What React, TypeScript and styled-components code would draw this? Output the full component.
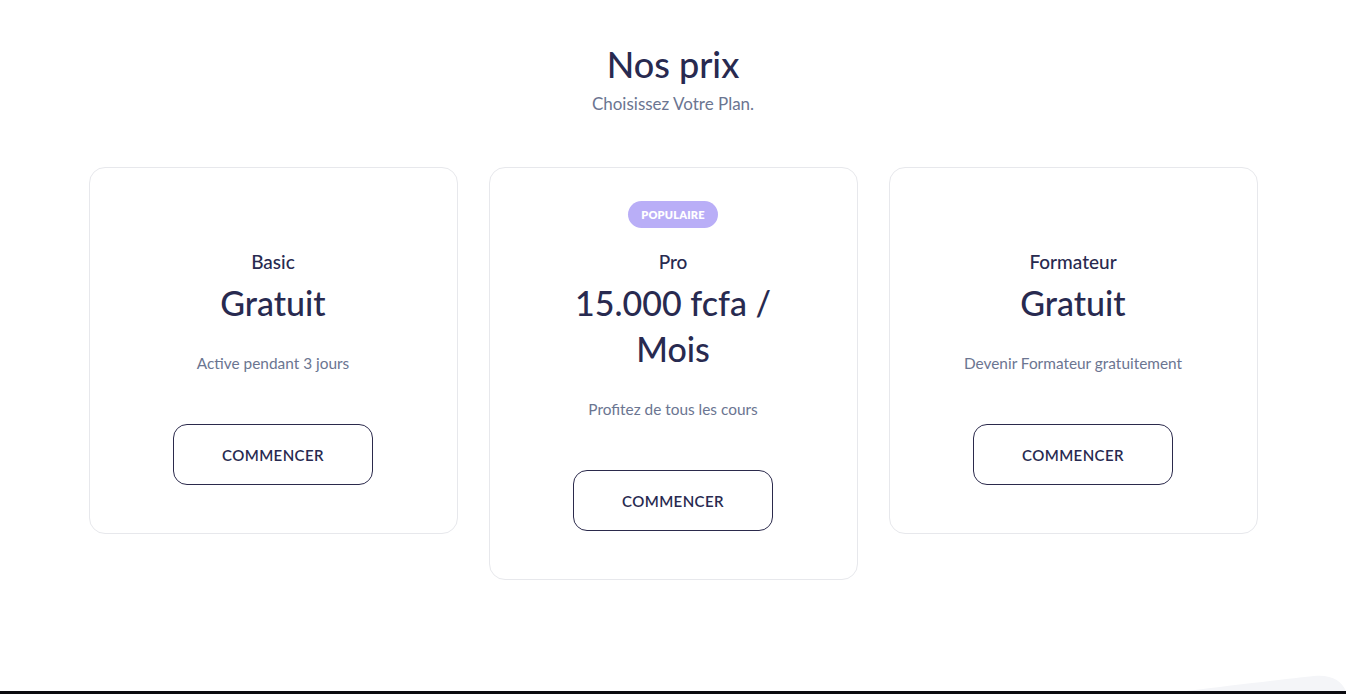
import React from "react";
import styled, { createGlobalStyle } from "styled-components";

const Global = createGlobalStyle`
  html, body { margin: 0; padding: 0; background: #ffffff; }
  body { font-family: Lato, "Noto Sans", sans-serif; color: #272a4f; }
  * { box-sizing: border-box; }
`;

const Page = styled.div`
  display: flex;
  flex-direction: column;
  min-height: 694px;
`;

const Section = styled.section`
  position: relative;
  height: 691px;
  padding-top: 42px;
  overflow: hidden;
`;

const Header = styled.header`
  display: flex;
  flex-direction: column;
  align-items: center;
  gap: 6px;
`;

const Title = styled.h2`
  margin: 0;
  font-size: 36px;
  line-height: 44px;
  font-weight: 500;
  color: #282a50;
`;

const Subtitle = styled.p`
  margin: 0;
  font-size: 17px;
  line-height: 24px;
  color: #6b7591;
`;

const Grid = styled.div`
  display: grid;
  grid-template-columns: repeat(3, 369px);
  column-gap: 31px;
  justify-content: center;
  align-items: start;
  margin-top: 51px;
`;

const Card = styled.div`
  display: flex;
  flex-direction: column;
  align-items: center;
  text-align: center;
  border: 1px solid #e7e8ec;
  border-radius: 16px;
  padding: 33px 48px 48px;
  background: #fff;
`;

const BadgeSlot = styled.div`
  height: 27px;
  margin-bottom: 20px;
  display: flex;
  justify-content: center;
`;

const Badge = styled.span`
  display: inline-flex;
  align-items: center;
  height: 27px;
  padding: 0 13px;
  border-radius: 14px;
  background: #b9aef7;
  color: #fff;
  font-size: 11px;
  font-weight: 800;
  letter-spacing: 0.2px;
`;

const PlanName = styled.h3`
  margin: 0;
  font-size: 19px;
  line-height: 28px;
  font-weight: 500;
  color: #282a50;
`;

const Price = styled.div`
  margin-top: 4px;
  max-width: 250px;
  font-size: 34px;
  line-height: 46px;
  font-weight: 500;
  color: #282a50;
`;

const Desc = styled.p`
  margin: 25px 0 0;
  font-size: 15.4px;
  line-height: 24px;
  color: #6b7591;
`;

const Button = styled.button`
  margin-top: 49px;
  width: 200px;
  height: 61px;
  border: 1px solid #2b2a4c;
  border-radius: 14px;
  background: #fff;
  color: #282a50;
  font-family: inherit;
  font-size: 15px;
  font-weight: 600;
  letter-spacing: 0.4px;
  text-transform: uppercase;
  cursor: pointer;
`;

const Wave = styled.svg`
  position: absolute;
  right: 0;
  bottom: 0;
  width: 200px;
  height: 20px;
`;

const Footer = styled.footer`
  height: 3px;
  background: #0a0a0f;
`;

type Plan = { name: string; price: string; desc: string; badge?: string };

const plans: Plan[] = [
  { name: "Basic", price: "Gratuit", desc: "Active pendant 3 jours" },
  { name: "Pro", price: "15.000 fcfa / Mois", desc: "Profitez de tous les cours", badge: "POPULAIRE" },
  { name: "Formateur", price: "Gratuit", desc: "Devenir Formateur gratuitement" },
];

export default function App() {
  return (
    <Page>
      <Global />
      <Section>
        <Header>
          <Title>Nos prix</Title>
          <Subtitle>Choisissez Votre Plan.</Subtitle>
        </Header>
        <Grid>
          {plans.map((p) => (
            <Card key={p.name}>
              <BadgeSlot>{p.badge && <Badge>{p.badge}</Badge>}</BadgeSlot>
              <PlanName>{p.name}</PlanName>
              <Price>{p.price}</Price>
              <Desc>{p.desc}</Desc>
              <Button>Commencer</Button>
            </Card>
          ))}
        </Grid>
        <Wave viewBox="0 0 200 20" preserveAspectRatio="none">
          <path d="M40 20 C 90 14, 140 8, 168 5 C 185 3, 196 10, 200 20 Z" fill="#f4f5f8" />
        </Wave>
      </Section>
      <Footer />
    </Page>
  );
}
